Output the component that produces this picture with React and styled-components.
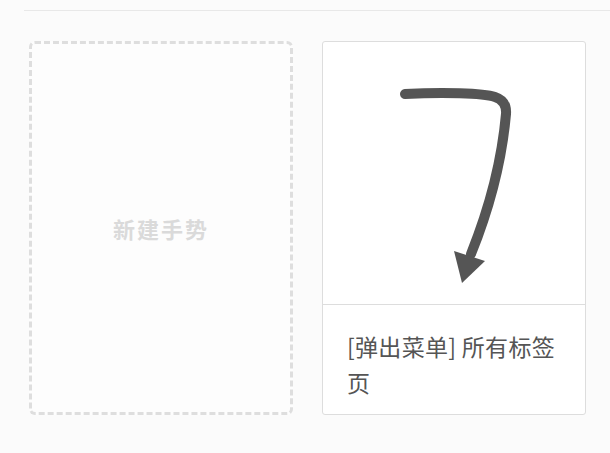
import styled, { createGlobalStyle } from "styled-components";

const GlobalStyle = createGlobalStyle`
  html, body {
    margin: 0;
    padding: 0;
    background: #fbfbfb;
    font-family: "Noto Sans CJK SC", "Noto Sans", sans-serif;
  }
`;

const Page = styled.div`
  width: 610px;
  height: 453px;
  overflow: hidden;
`;

const TopBar = styled.div`
  margin-left: 24px;
  height: 10px;
  border-bottom: 1px solid #e8e8e8;
`;

const Grid = styled.div`
  display: grid;
  grid-template-columns: 264px 264px;
  gap: 29px;
  padding: 30px 0 0 29px;
`;

const NewCard = styled.div`
  box-sizing: border-box;
  height: 374px;
  border: 3px dashed #dedede;
  border-radius: 6px;
  background: #fdfdfd;
  display: flex;
  align-items: center;
  justify-content: center;
`;

const NewLabel = styled.span`
  font-size: 22px;
  font-weight: 700;
  color: #dadada;
  letter-spacing: 2px;
`;

const GestureCard = styled.div`
  box-sizing: border-box;
  height: 374px;
  border: 1px solid #dddddd;
  border-radius: 3px;
  background: #ffffff;
  display: flex;
  flex-direction: column;
`;

const Preview = styled.div`
  height: 262px;
  border-bottom: 1px solid #dddddd;
  display: flex;
`;

const Caption = styled.div`
  padding: 23px 22px 0 24px;
  font-size: 23px;
  line-height: 36px;
  letter-spacing: 0.3px;
  color: #555555;
`;

const GestureArrow = () => (
  <svg width="262" height="262" viewBox="0 0 262 262">
    <path
      d="M82 52 C 120 50, 160 51, 172 55 Q 184 59, 183 72 Q 177 140, 148 212"
      fill="none"
      stroke="#555555"
      strokeWidth="10"
      strokeLinecap="round"
      strokeLinejoin="round"
    />
    <polygon points="131,209 162,219 139,241" fill="#555555" />
  </svg>
);

const App = () => {
  return (
    <Page>
      <GlobalStyle />
      <TopBar />
      <Grid>
        <NewCard>
          <NewLabel>新建手势</NewLabel>
        </NewCard>
        <GestureCard>
          <Preview>
            <GestureArrow />
          </Preview>
          <Caption>[弹出菜单] 所有标签页</Caption>
        </GestureCard>
      </Grid>
    </Page>
  );
};

export default App;
